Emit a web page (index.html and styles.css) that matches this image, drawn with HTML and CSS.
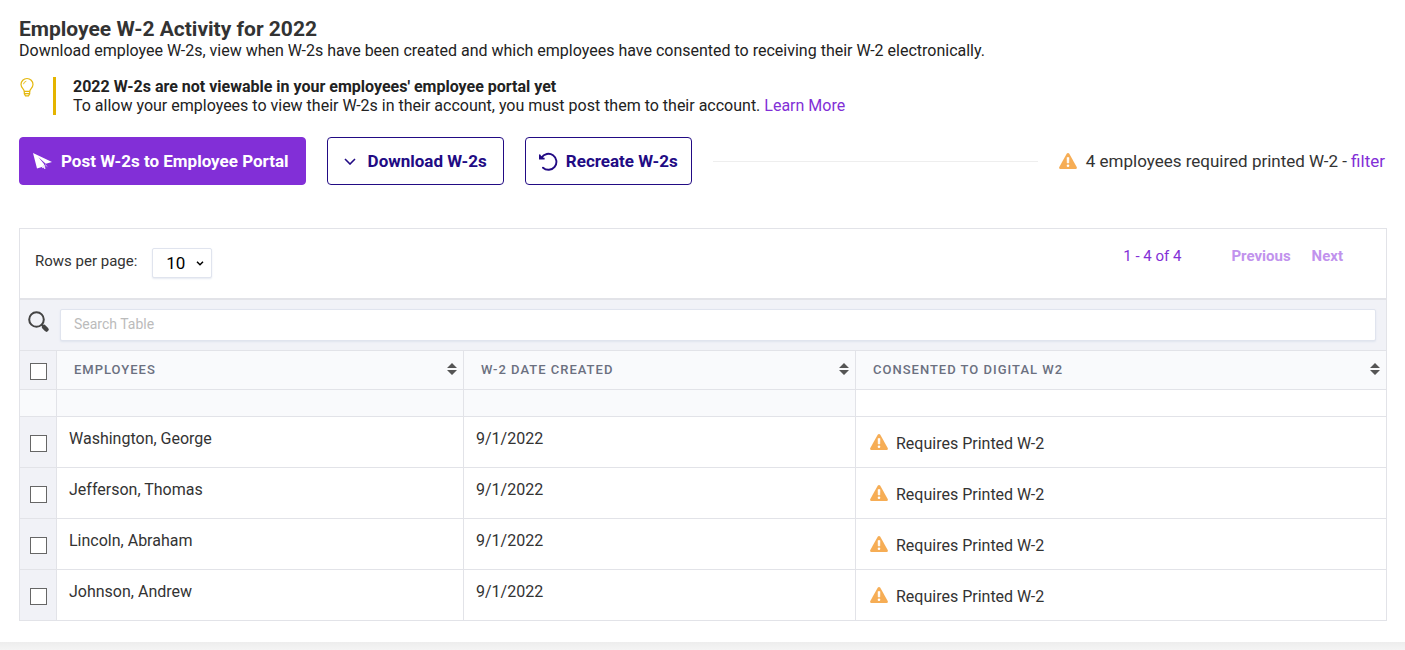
FILE: index.html
```html
<!DOCTYPE html>
<html lang="en">
<head>
    <meta charset="utf-8">
    <title>Employee W-2 Activity</title>
    <meta name="viewport" content="width=device-width, initial-scale=1.0">
    <link rel="stylesheet" href="styles.css">
</head>
<body>
    <!-- shared icons -->
    <svg class="sprite" aria-hidden="true">
        <symbol id="warning" viewBox="0 0 18 16">
            <path d="M9 0C9.600 0 10 .3 10.300 .8L17.700 14C18.200 15 17.700 16 16.600 16H1.400C.3 16-.2 15 .3 14L7.700 .8C8 .3 8.400 0 9 0z" fill="#f6ad55"/>
            <path d="M8 4.500h2l-.2 5.500H8.200z" fill="#fff" stroke="#fff" stroke-width=".5"/>
            <circle cx="9" cy="12.700" r="1.300" fill="#fff"/>
        </symbol>
        <symbol id="sort" viewBox="0 0 10 12">
            <path d="M5 0l5 5H0zM0 7h10l-5 5z" fill="#555"/>
        </symbol>
    </svg>

    <main class="page">
        <h1>Employee W-2 Activity for 2022</h1>
        <p class="intro">Download employee W-2s, view when W-2s have been created and which employees have consented to receiving their W-2 electronically.</p>

        <div class="notice">
            <svg class="bulb" viewBox="0 0 15 20" fill="none" stroke="#e4b80e" stroke-width="1.200" aria-hidden="true">
                <path d="M5.300 14.400C5.300 12 2 10.800 2 7.500a6 6 0 0 1 12 0c0 3.300-3.300 4.500-3.300 6.900z"/>
                <path d="M5.300 14.400v2.400l1.200 2h3l1.200-2v-2.400M5.500 16.600h5"/>
                <path d="M4.500 7.200a3.300 3.300 0 0 1 2.800-2.900" stroke-width=".9"/>
            </svg>
            <div class="notice-text">
                <strong>2022 W-2s are not viewable in your employees' employee portal yet</strong>
                <p>To allow your employees to view their W-2s in their account, you must post them to their account. <a href="#">Learn More</a></p>
            </div>
        </div>

        <div class="actions">
            <button class="btn btn-primary" type="button">
                <svg width="19" height="17" viewBox="0 0 19 17" aria-hidden="true">
                    <path d="M0 0l19 9-6.200 1.700L5.200 4l6 7.300-.7 2.200L4 15.500z" fill="#fff"/>
                    <path d="M9 14.600l2.500-2.300.5 3.700-1.200-1.400zM12 11.500l2.300 2" fill="#fff" stroke="#fff" stroke-width=".6"/>
                </svg>
                Post W-2s to Employee Portal
            </button>
            <button class="btn btn-download" type="button">
                <svg width="12" height="7" viewBox="0 0 12 7" fill="none" stroke="#220b84" stroke-width="1.600" aria-hidden="true">
                    <path d="M1 1l5 5 5-5"/>
                </svg>
                Download W-2s
            </button>
            <button class="btn" type="button">
                <svg width="19" height="19" viewBox="0 0 19 19" fill="none" stroke="#220b84" stroke-width="1.900" aria-hidden="true">
                    <path d="M2.600 5.600A8 8 0 1 1 4 15.700" stroke-linecap="round"/>
                    <path d="M.6 2.400v4.200h5" stroke-width="1.600"/>
                    <path d="M.6 2.400l4.600 4.200H.6z" fill="#220b84" stroke="none"/>
                </svg>
                Recreate W-2s
            </button>
            <hr class="rule">
            <div class="printed">
                <svg class="warn" aria-hidden="true"><use href="#warning"/></svg>
                <span>4 employees required printed W-2 - <a href="#">filter</a></span>
            </div>
        </div>

        <section class="panel">
            <div class="toolbar">
                <label for="rows">Rows per page:</label>
                <div class="select">
                    <select id="rows">
                        <option>10</option>
                        <option>25</option>
                        <option>50</option>
                    </select>
                    <svg width="8" height="5" viewBox="0 0 8 5" fill="none" stroke="#000" stroke-width="1.500" aria-hidden="true">
                        <path d="M1 .7l3 3 3-3"/>
                    </svg>
                </div>
                <div class="pager">
                    <span class="count">1 - 4 of 4</span>
                    <button type="button" disabled>Previous</button>
                    <button type="button" disabled>Next</button>
                </div>
            </div>

            <div class="search">
                <svg width="22" height="22" viewBox="0 0 22 22" fill="none" stroke="#444" aria-hidden="true">
                    <circle cx="8.500" cy="8.500" r="7.300" stroke-width="2"/>
                    <path d="M13.500 13.500l2 2" stroke-width="2"/>
                    <path d="M16 16l2.500 2.500" stroke-width="4.500" stroke-linecap="round"/>
                </svg>
                <input type="text" placeholder="Search Table" aria-label="Search Table">
            </div>

            <table>
                <colgroup>
                    <col class="col-check">
                    <col class="col-name">
                    <col class="col-date">
                    <col>
                </colgroup>
                <thead>
                    <tr>
                        <th class="check"><input type="checkbox" aria-label="Select all employees"></th>
                        <th><div class="head">Employees <svg class="sort" aria-hidden="true"><use href="#sort"/></svg></div></th>
                        <th><div class="head">W-2 Date Created <svg class="sort" aria-hidden="true"><use href="#sort"/></svg></div></th>
                        <th><div class="head">Consented to Digital W2 <svg class="sort" aria-hidden="true"><use href="#sort"/></svg></div></th>
                    </tr>
                    <tr class="filters">
                        <td></td>
                        <td></td>
                        <td></td>
                        <td class="blank"></td>
                    </tr>
                </thead>
                <tbody>
                    <tr>
                        <td class="check"><input type="checkbox" aria-label="Select Washington, George"></td>
                        <td>Washington, George</td>
                        <td>9/1/2022</td>
                        <td><div class="status"><svg class="warn" aria-hidden="true"><use href="#warning"/></svg><span>Requires Printed W-2</span></div></td>
                    </tr>
                    <tr>
                        <td class="check"><input type="checkbox" aria-label="Select Jefferson, Thomas"></td>
                        <td>Jefferson, Thomas</td>
                        <td>9/1/2022</td>
                        <td><div class="status"><svg class="warn" aria-hidden="true"><use href="#warning"/></svg><span>Requires Printed W-2</span></div></td>
                    </tr>
                    <tr>
                        <td class="check"><input type="checkbox" aria-label="Select Lincoln, Abraham"></td>
                        <td>Lincoln, Abraham</td>
                        <td>9/1/2022</td>
                        <td><div class="status"><svg class="warn" aria-hidden="true"><use href="#warning"/></svg><span>Requires Printed W-2</span></div></td>
                    </tr>
                    <tr>
                        <td class="check"><input type="checkbox" aria-label="Select Johnson, Andrew"></td>
                        <td>Johnson, Andrew</td>
                        <td>9/1/2022</td>
                        <td><div class="status"><svg class="warn" aria-hidden="true"><use href="#warning"/></svg><span>Requires Printed W-2</span></div></td>
                    </tr>
                </tbody>
            </table>
        </section>
    </main>
</body>
</html>
```
FILE: styles.css
```css
* {
    box-sizing: border-box;
}

body {
    margin: 0;
    min-height: 100vh;
    background: linear-gradient(#ededed, #f4f4f4) bottom / 100% 8px no-repeat, #fff;
    color: #222;
    font-family: Roboto, sans-serif;
    font-size: 16px;
    line-height: 19px;
}

a {
    color: #822fd7;
    text-decoration: none;
}

p {
    margin: 0;
}

.sprite {
    display: none;
}

.page {
    padding: 17px 18px 29px 19px;
}

h1 {
    margin: 0;
    color: #333;
    font-size: 21px;
    line-height: 24px;
}

/* notice */
.notice {
    display: flex;
    gap: 19px;
    margin-top: 17px;
}

.bulb {
    width: 15px;
    height: 20px;
}

.notice-text {
    padding-left: 17px;
    border-left: 3px solid #e4b400;
}

/* buttons */
.actions {
    display: flex;
    align-items: center;
    gap: 21px;
    margin-top: 22px;
}

.btn {
    display: flex;
    align-items: center;
    gap: 8px;
    height: 48px;
    padding: 0 13px;
    border: 1px solid #220b84;
    border-radius: 4px;
    background: #fff;
    color: #220b84;
    font: bold 17px/20px Roboto, sans-serif;
    white-space: nowrap;
    cursor: pointer;
}

.btn-primary {
    gap: 9px;
    padding-right: 16px;
    border-color: #822fd7;
    background: #822fd7;
    color: #fff;
}

.btn-download {
    gap: 12px;
    padding: 0 16px;
}

.rule {
    flex: 1;
    margin: 0;
    border: 0;
    border-top: 1px solid #eee;
}

.printed {
    display: flex;
    align-items: center;
    gap: 9px;
    padding-right: 2px;
    color: #333;
    font-size: 17px;
}

.warn {
    flex: none;
    width: 18px;
    height: 16px;
}

/* table panel */
.panel {
    margin-top: 43px;
    border: 1px solid #e2e3e8;
    border-bottom: 0;
}

.toolbar {
    display: flex;
    align-items: flex-start;
    height: 71px;
    padding: 18px 43px 0 15px;
    border-bottom: 2px solid #e2e3e8;
    color: #333;
    font-size: 15px;
}

.toolbar label {
    padding-top: 5px;
}

.select {
    position: relative;
    margin-top: 1px;
    margin-left: 15px;
}

.select select {
    appearance: none;
    width: 60px;
    height: 30px;
    padding: 0 13px;
    border: 1px solid #e0e4ee;
    border-radius: 2px;
    background: #fff;
    box-shadow: 0 1px 2px #e6eaf2;
    color: #000;
    font: 17px/20px Roboto, sans-serif;
}

.select svg {
    position: absolute;
    top: 13px;
    right: 8px;
    pointer-events: none;
}

.pager {
    display: flex;
    gap: 21px;
    margin-left: auto;
}

.count {
    margin-right: 29px;
    color: #822fd7;
}

.pager button {
    padding: 0;
    border: 0;
    background: none;
    color: #c192ed;
    font: bold 15px/19px Roboto, sans-serif;
}

.search {
    display: flex;
    gap: 10px;
    height: 50px;
    padding: 9px 10px 8px 8px;
    background: #f1f2f7;
}

.search svg {
    flex: none;
    margin-top: 2px;
}

.search input {
    flex: 1;
    height: 32px;
    padding: 0 13px 2px;
    border: 1px solid #e0e4ee;
    border-radius: 2px;
    background: #fff;
    box-shadow: 0 1px 2px #dfe4ee;
    font: 14px/16px Roboto, sans-serif;
}

.search input::placeholder {
    color: #bbb;
}

table {
    width: 100%;
    table-layout: fixed;
    border-collapse: separate;
    border-spacing: 0;
    border-bottom: 1px solid #e2e3e8;
}

.col-check {
    width: 37px;
}

.col-name {
    width: 407px;
}

.col-date {
    width: 392px;
}

th,
td {
    padding: 0 12px;
    border-top: 1px solid #e2e3e8;
    border-right: 1px solid #e2e3e8;
    text-align: left;
}

th:last-child,
td:last-child {
    border-right: 0;
}

th {
    height: 39px;
    padding: 0 6px 2px 17px;
    background: #f9fafc;
    color: #6b7080;
    font-size: 13px;
    font-weight: 500;
    letter-spacing: 1px;
    text-transform: uppercase;
}

.head {
    display: flex;
    align-items: center;
    justify-content: space-between;
}

.sort {
    width: 10px;
    height: 12px;
}

.filters td {
    height: 27px;
    background: #f9fafc;
}

.filters .blank {
    background: #fff;
}

tbody td {
    height: 51px;
    padding-top: 12px;
    color: #333;
    vertical-align: top;
}

.status {
    display: flex;
    gap: 8px;
    padding: 5px 2px 0;
}

.check,
tbody .check {
    padding: 2px 0 0;
    background: #f1f2f7;
    text-align: center;
    vertical-align: middle;
}

.check input {
    display: block;
    appearance: none;
    width: 17px;
    height: 17px;
    margin: 0 auto;
    border: 1px solid #666;
    background: #fff;
}

.check input:checked {
    background: #822fd7;
}
```
